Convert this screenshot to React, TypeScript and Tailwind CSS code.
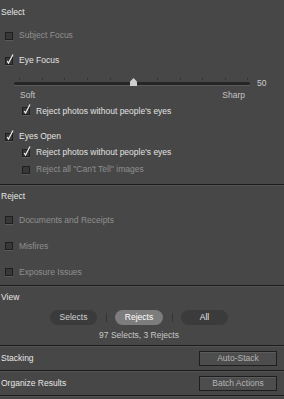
import React from 'react';

const font = { fontFamily: '"Liberation Sans", Arial, sans-serif' };

function Box({ checked }: { checked?: boolean }) {
  return (
    <span className="relative inline-block w-[8px] h-[8px] shrink-0 bg-[#383838] border border-[#1f1f1f] shadow-[0_1px_0_#5a5a5a]">
      {checked && (
        <svg
          className="absolute left-[-1px] top-[-5px] overflow-visible"
          width="10"
          height="12"
          viewBox="0 0 10 12"
        >
          <path d="M2.2 8 L3.5 10 L8 1.5" fill="none" stroke="#f0f0f0" strokeWidth="1.2" />
        </svg>
      )}
    </span>
  );
}

function Row({
  label,
  checked,
  disabled,
  indent,
  h,
}: {
  label: string;
  checked?: boolean;
  disabled?: boolean;
  indent?: boolean;
  h: string;
}) {
  return (
    <div className={`flex items-center ${h} ${indent ? 'pl-[22px]' : 'pl-[5px]'}`}>
      <Box checked={checked} />
      <span className={`ml-[6px] ${disabled ? 'text-[#8f8f8f]' : 'text-[#e2e2e2]'}`}>{label}</span>
    </div>
  );
}

function Sep() {
  return (
    <div>
      <div className="h-px bg-[#1c1c1c]" />
      <div className="h-px bg-[#525252]" />
    </div>
  );
}

const ticks = [19, 42, 64, 87, 110, 133, 157, 180, 202, 225, 247];

export default function App() {
  return (
    <div className="w-[284px] h-[399px] bg-[#474747] overflow-hidden text-[8.5px] leading-none pt-px" style={font}>
      {/* Select */}
      <div className="h-[22px] flex items-center pl-px text-[#e6e6e6]">Select</div>
      <Row label="Subject Focus" disabled h="h-[25px]" />
      <Row label="Eye Focus" checked h="h-[25px]" />

      <div className="mt-[4px] h-[13px] flex items-center pl-[14px]">
        <div className="relative w-[236px] h-[3px] rounded-full bg-[#262626] shadow-[0_1px_0_#5a5a5a]">
          {ticks.map((t) => (
            <span key={t} className="absolute top-[-4px] w-px h-[2px] bg-[#333]" style={{ left: t - 14 }} />
          ))}
          <svg className="absolute top-[-4px] left-[116px]" width="7" height="8" viewBox="0 0 7 8">
            <polygon points="3.5,0 7,3.5 7,8 0,8 0,3.5" fill="#cfcfcf" />
          </svg>
        </div>
        <span className="ml-[7px] text-[#cfcfcf]">50</span>
      </div>
      <div className="h-[10px] flex items-center justify-between pl-[20px] w-[245px] text-[#c4c4c4]">
        <span>Soft</span>
        <span>Sharp</span>
      </div>

      <Row label="Reject photos without people's eyes" checked indent h="h-[22px]" />
      <div className="mt-[7px]">
        <Row label="Eyes Open" checked h="h-[15px]" />
      </div>
      <Row label="Reject photos without people's eyes" checked indent h="h-[17px]" />
      <Row label={'Reject all "Can\'t Tell" images'} disabled indent h="h-[17px]" />
      <div className="h-[6px]" />
      <Sep />

      {/* Reject */}
      <div className="h-[21px] flex items-center pl-px text-[#e6e6e6]">Reject</div>
      <Row label="Documents and Receipts" disabled h="h-[26px]" />
      <Row label="Misfires" disabled h="h-[26px]" />
      <Row label="Exposure Issues" disabled h="h-[26px]" />
      <Sep />

      {/* View */}
      <div className="h-[20px] flex items-center pl-px text-[#e6e6e6]">View</div>
      <div className="h-[20px] flex items-center pl-[50px]">
        <span className="w-[47px] h-[15px] rounded-full bg-[#3b3b3b] flex items-center justify-center text-[#d4d4d4]">Selects</span>
        <span className="ml-[9px] mr-[8px] w-px h-[9px] bg-[#353535]" />
        <span className="w-[48px] h-[15px] rounded-full bg-[#7d7d7d] flex items-center justify-center text-white">Rejects</span>
        <span className="ml-[9px] mr-[8px] w-px h-[9px] bg-[#353535]" />
        <span className="w-[47px] h-[15px] rounded-full bg-[#3b3b3b] flex items-center justify-center text-[#e8e8e8]">All</span>
      </div>
      <div className="h-[16px] flex items-center justify-center ml-[50px] w-[178px] text-[#c8c8c8]">97 Selects, 3 Rejects</div>
      <div className="h-[2px]" />
      <Sep />

      {/* Stacking */}
      <div className="h-[23px] flex items-center justify-between pl-px pr-[7px]">
        <span className="text-[#e6e6e6]">Stacking</span>
        <button className="w-[78px] h-[15px] bg-[#4d4d4d] border border-[#1e1e1e] shadow-[inset_0_1px_0_#5c5c5c] text-[#b4b4b4] flex items-center justify-center">
          Auto-Stack
        </button>
      </div>
      <Sep />
      <div className="h-[23px] flex items-center justify-between pl-px pr-[7px]">
        <span className="text-[#e6e6e6]">Organize Results</span>
        <button className="w-[78px] h-[15px] bg-[#4d4d4d] border border-[#1e1e1e] shadow-[inset_0_1px_0_#5c5c5c] text-[#b4b4b4] flex items-center justify-center">
          Batch Actions
        </button>
      </div>
      <Sep />
    </div>
  );
}
